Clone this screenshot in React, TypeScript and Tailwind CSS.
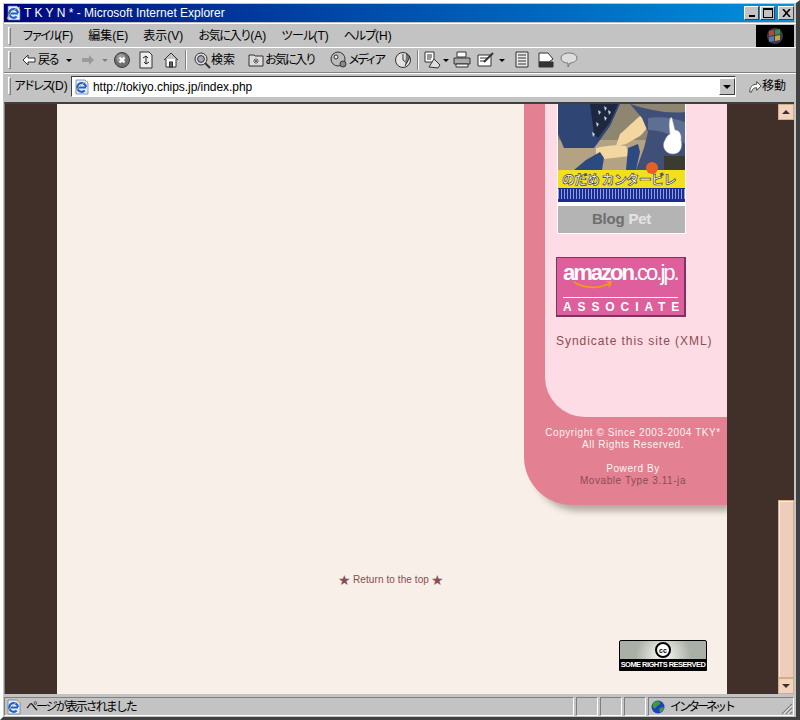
const uiFont = "font-['Liberation_Sans','Noto_Sans_CJK_JP',sans-serif]";

function Grip() {
  return <div className="h-[18px] w-[3px] shrink-0 border-t border-l border-t-white border-l-white border-r border-b border-r-[#808080] border-b-[#808080]" />;
}

function IeLogo({ size = 16 }: { size?: number }) {
  return (
    <svg width={size} height={size} viewBox="0 0 16 16" className="shrink-0">
      <path d="M2 1h9l3 3v11H2z" fill="#e6ecf8" stroke="#5570a8" strokeWidth="0.7" />
      <path d="M4.5 8.5h7.5M12 8a4.4 4.4 0 1 0-1.3 3.6" fill="none" stroke="#1b62d0" strokeWidth="2.1" />
      <path d="M1 14c2-5 7-10 13-12" fill="none" stroke="#e8b93c" strokeWidth="0.9" />
    </svg>
  );
}

function Stop() {
  return (
    <svg width="16" height="18" viewBox="0 0 16 18">
      <circle cx="8" cy="9" r="7.5" fill="#6f6f6f" stroke="#3c3c3c" />
      <circle cx="7" cy="7.5" r="4.5" fill="#9b9b9b" />
      <path d="M5.5 6.5l5 5M10.5 6.5l-5 5" stroke="#fff" strokeWidth="2" />
    </svg>
  );
}

function Drop({ className }: { className: string }) {
  return <span className={`block h-0 w-0 shrink-0 border-x-[3px] border-t-[3px] border-x-transparent border-t-black ${className}`} />;
}

function Icon({ children, w = 18 }: { children: React.ReactNode; w?: number }) {
  return (
    <svg width={w} height="18" viewBox={`0 0 ${w} 18`} fill="none" stroke="#333" strokeWidth="1" className="shrink-0">
      {children}
    </svg>
  );
}

function Separator({ className }: { className: string }) {
  return <div className={`h-[20px] w-[2px] shrink-0 border-l border-l-[#808080] border-r border-r-white ${className}`} />;
}

function Globe() {
  return (
    <svg width="14" height="14" viewBox="0 0 14 14" className="shrink-0">
      <circle cx="7" cy="7" r="6.5" fill="#1c3fc4" />
      <path d="M3 2c2-1 5-1 6 0 1 2-1 3-3 4-1 2-2 3-3 2-2-1-2-4 0-6zM9 8c2-1 4-1 4 0 0 2-2 4-4 4-1-1-1-3 0-4z" fill="#3f9c35" />
    </svg>
  );
}

function TitleBar() {
  return (
    <div className="flex h-[18px] w-[790px] items-center bg-gradient-to-r from-[#00007f] to-[#0f90dc] pl-[2px]">
      <IeLogo />
      <span className="ml-[2px] text-[12px] leading-none text-white">T K Y N * - Microsoft Internet Explorer</span>
      <div className="ml-auto flex">
        <div className="flex h-[14px] w-[15px] items-end justify-center border border-t-white border-l-white border-r-[#404040] border-b-[#404040] bg-[#c3c3c3] pb-[2px]">
          <div className="h-[2px] w-[6px] bg-black" />
        </div>
        <div className="ml-[1px] flex h-[14px] w-[15px] items-center justify-center border border-t-white border-l-white border-r-[#404040] border-b-[#404040] bg-[#c3c3c3]">
          <div className="h-[10px] w-[10px] border border-t-2 border-black" />
        </div>
        <div className="ml-[3px] flex h-[14px] w-[16px] items-center justify-center border border-t-white border-l-white border-r-[#404040] border-b-[#404040] bg-[#c3c3c3]">
          <svg width="9" height="8" viewBox="0 0 9 8"><path d="M1 0l7 8M8 0l-7 8" stroke="#000" strokeWidth="1.6" /></svg>
        </div>
      </div>
    </div>
  );
}

function MenuBar() {
  return (
    <div className="mt-[1px] flex h-[24px] items-center border-t border-t-white pl-[4px] pr-[2px]">
      <Grip />
      <div className="ml-[11px] flex gap-[15px] whitespace-nowrap text-[12px] leading-none text-black">
        <span><span className="tracking-[-3px]">ファイル</span>(F)</span>
        <span>編集(E)</span>
        <span>表示(V)</span>
        <span><span className="tracking-[-1.6px]">お気に入り</span>(A)</span>
        <span><span className="tracking-[-1.3px]">ツール</span>(T)</span>
        <span><span className="tracking-[-1.6px]">ヘルプ</span>(H)</span>
      </div>
      <div className="ml-auto flex h-[22px] w-[38px] items-center justify-center bg-black">
        <svg width="18" height="16" viewBox="0 0 18 16">
          <circle cx="9" cy="8" r="8" fill="#3a3a50" />
          <path d="M3 3l5-1v5l-5 1z" fill="#b8483a" />
          <path d="M9 2l5-1v5l-5 1z" fill="#3f8f45" />
          <path d="M3 9l5-1v5l-5 1z" fill="#5a77b0" />
          <path d="M9 8l5-1v5l-5 1z" fill="#c6a23a" />
        </svg>
      </div>
    </div>
  );
}

function ToolBar() {
  return (
    <div className="flex h-[26px] items-center whitespace-nowrap border-t border-t-white border-b border-b-[#808080] pl-[4px] text-[12px] leading-none text-black">
      <Grip />
      <svg width="14" height="12" viewBox="0 0 14 12" className="ml-[11px] shrink-0"><path d="M6 1L1 6l5 5V8h7V4H6z" fill="#fff" stroke="#333" /></svg>
      <span className="ml-[2px] w-[20px] tracking-[-2px]">戻る</span>
      <Drop className="ml-[8px]" />
      <svg width="14" height="12" viewBox="0 0 14 12" className="ml-[9px] shrink-0"><path d="M8 1l5 5-5 5V8H1V4h7z" fill="#9a9a9a" /></svg>
      <span className="ml-[7px] block h-0 w-0 border-x-[3px] border-t-[3px] border-x-transparent border-t-[#808080]" />
      <div className="ml-[6px] flex"><Stop /></div>
      <div className="ml-[9px] flex">
        <Icon w={14}>
          <path d="M1 1h9l3 3v13H1z" fill="#eee" />
          <path d="M4 7l3-2 2 2M10 11l-3 2-2-2M7 5v8" stroke="#222" />
        </Icon>
      </div>
      <div className="ml-[10px] flex">
        <Icon w={16}>
          <path d="M1 9l7-7 7 7" />
          <path d="M3 8v8h10V8" fill="#fff" />
          <rect x="6.5" y="11" width="3" height="5" fill="#666" />
        </Icon>
      </div>
      <Separator className="ml-[6px]" />
      <div className="ml-[6px] flex">
        <Icon>
          <circle cx="8" cy="8" r="6" fill="#ddd" />
          <circle cx="8" cy="8" r="3.4" fill="#aab" />
          <path d="M12 12l5 5" strokeWidth="2" />
        </Icon>
      </div>
      <span className="w-[23px]">検索</span>
      <div className="ml-[14px] flex">
        <Icon w={16}>
          <path d="M1 4h5l1 1h8v10H1z" fill="#ddd" />
          <path d="M8 7v6M5 10h6M6 8l4 4M10 8l-4 4" stroke="#666" />
        </Icon>
      </div>
      <span className="ml-[1px] w-[51px] tracking-[-2px]">お気に入り</span>
      <div className="ml-[14px] flex">
        <Icon>
          <circle cx="8" cy="8" r="7" fill="#bbb" />
          <circle cx="6" cy="6" r="2" fill="#eee" />
          <circle cx="13" cy="13" r="3" fill="#8a8a8a" />
        </Icon>
      </div>
      <span className="w-[33px] tracking-[-3px]">メディア</span>
      <div className="ml-[13px] flex">
        <Icon>
          <circle cx="9" cy="9" r="7.5" fill="#e4e4e4" />
          <path d="M9 9V3M9 9l4 3" />
          <path d="M12 3l4 3-5 9" fill="#777" />
        </Icon>
      </div>
      <Separator className="ml-[5px]" />
      <div className="ml-[5px] flex">
        <Icon>
          <path d="M1 1h9v10H1z" fill="#fff" />
          <path d="M3 4h5M3 6h5M3 8h4" />
          <path d="M5 16l5-8 6 6-2 3z" fill="#ddd" />
        </Icon>
      </div>
      <Drop className="ml-[1px]" />
      <div className="ml-[4px] flex">
        <Icon>
          <path d="M4 1h9v5H4z" fill="#fff" />
          <path d="M1 7h16v6H1z" fill="#aaa" />
          <path d="M3 13h12v3H3z" fill="#eee" />
        </Icon>
      </div>
      <div className="ml-[6px] flex">
        <Icon>
          <path d="M1 4h13v11H1z" fill="#fff" />
          <path d="M3 7h7M3 10h5" />
          <path d="M7 11l9-9" strokeWidth="2" />
        </Icon>
      </div>
      <Drop className="ml-[4px]" />
      <div className="ml-[8px] flex">
        <Icon>
          <path d="M3 1h12v15H3z" fill="#e8e8e8" />
          <path d="M5 4h8M5 7h8M5 10h8M5 13h8" />
        </Icon>
      </div>
      <div className="ml-[6px] flex">
        <Icon>
          <path d="M2 2h9l5 6-4 3H2z" fill="#fff" />
          <path d="M2 11h14v5H2z" fill="#333" />
        </Icon>
      </div>
      <div className="ml-[5px] flex">
        <Icon>
          <path d="M1 7c0-3 4-5 8-5s8 2 8 5-4 5-7 5l-2 4v-4c-4 0-7-2-7-5z" fill="#ddd" stroke="#777" />
        </Icon>
      </div>
    </div>
  );
}

function AddressBar() {
  return (
    <div className="flex h-[29px] items-start border-t border-t-white pl-[4px] pt-[2px] text-[12px] leading-none">
      <div className="pt-[1px]"><Grip /></div>
      <span className="ml-[3px] w-[57px] shrink-0 whitespace-nowrap pt-[4px]"><span className="tracking-[-2.75px]">アドレス</span>(D)</span>
      <div className="flex h-[21px] flex-1 items-center border border-t-[#404040] border-l-[#404040] border-r-white border-b-white bg-white pl-[2px]">
        <IeLogo />
        <span className="ml-[3px] text-[12px] tracking-[-0.05px] text-black">http://tokiyo.chips.jp/index.php</span>
        <div className="ml-auto flex h-[17px] w-[16px] items-center justify-center border border-t-white border-l-white border-r-[#404040] border-b-[#404040] bg-[#c3c3c3]">
          <span className="h-0 w-0 border-x-[4px] border-t-[4px] border-x-transparent border-t-black" />
        </div>
      </div>
      <div className="flex w-[60px] items-center pl-[12px] pt-[2px]">
        <svg width="14" height="16" viewBox="0 0 16 16" fill="none" stroke="#333" className="shrink-0"><path d="M2 15c0-6 3-9 8-9V3l5 5-5 5v-3c-3 0-5 1-6 5z" fill="#fff" /></svg>
        <span className="whitespace-nowrap">移動</span>
      </div>
    </div>
  );
}

function Banner() {
  return (
    <div className="w-[129px] border-x border-b border-white bg-white">
      <svg width="127" height="98" viewBox="0 0 127 98" className="block">
        <rect width="127" height="66" fill="#8f8672" />
        <rect width="16" height="30" fill="#a8905c" />
        <rect y="36" width="127" height="30" fill="#b3a283" />
        <path d="M0 0h62l-10 22-10 14-6 8H6L0 30z" fill="#2f4675" />
        <path d="M32 0h28L52 18l-12 16-4-4z" fill="#1d2740" />
        <path d="M40 6l3 2-2 3zM46 2l3 2-2 3zM38 18l3 2-2 3zM46 12l3 2-2 3zM34 28l3 2-2 3zM50 6l3 2-2 3z" fill="#c8d0e0" />
        <path d="M62 30c10-8 22-22 28-22 4 2 2 16-8 24l-14 8-10 2z" fill="#f4d6a0" />
        <path d="M38 44c8-2 22-4 30-2l4 10-34 4z" fill="#f4d6a0" />
        <path d="M72 0c18 6 38 10 55 8v58H78l8-22 4-16-6-14z" fill="#3f4f78" />
        <path d="M90 14c12-2 26 0 37 4v22c-12-10-26-14-37-14z" fill="#5f6f94" />
        <path d="M16 66l12-10 14-8 4 6-2 12z" fill="#2c4a80" />
        <path d="M68 66l2-22 10-4 2 8-4 18z" fill="#2c4a80" />
        <path d="M112 30c-2-12 0-18 2-16l3 12c4 0 7 4 6 10 2 6 0 14-8 14s-12-8-8-14c1-3 3-5 5-6z" fill="#fff" stroke="#999" strokeWidth="0.5" />
        <rect x="106" y="52" width="21" height="14" fill="#3b3b30" />
        <rect y="66" width="127" height="18" fill="#f2e01c" />
        <circle cx="94" cy="64" r="6" fill="#e6602a" />
        <text x="4" y="80" fontSize="13" fontWeight="700" fontFamily="'Noto Sans CJK JP',sans-serif" fill="#fff" stroke="#444" strokeWidth="0.7" letterSpacing="-0.6">のだめ カンタービレ</text>
        <rect y="84" width="127" height="14" fill="#1b2c92" />
        <path d="M0 90h127" stroke="#8fa0e0" strokeDasharray="1 2" strokeWidth="10" />
      </svg>
      <div className="mt-[4px] flex h-[27px] items-center justify-center bg-[#b4b4b4] font-['Liberation_Sans',sans-serif] text-[15px] font-bold tracking-[-0.2px]">
        <span className="text-[#6e6e6e]">Blog&nbsp;</span><span className="text-[#e4e4e4]">Pet</span>
      </div>
    </div>
  );
}

function Amazon() {
  return (
    <div className="mt-[23px] h-[60px] w-[130px] border border-b-2 border-r-2 border-[#7b3560] bg-[#de5f9b] px-[6px] text-white">
      <div className="relative h-[39px] whitespace-nowrap pt-[4px] font-['Liberation_Sans',sans-serif] text-[22px] leading-[22px] tracking-[-2px]">
        <span className="font-bold">amazon</span><span>.co.jp.</span>
        <svg width="40" height="9" viewBox="0 0 40 9" className="absolute left-[10px] top-[23px]">
          <path d="M1 1c10 7 26 7 36 1M33 0l5 1-2 5" fill="none" stroke="#f39a1a" strokeWidth="1.6" />
        </svg>
      </div>
      <div className="whitespace-nowrap border-t border-t-white pt-[3px] font-['Liberation_Sans',sans-serif] text-[12px] font-bold leading-[12px] tracking-[5.9px]">ASSOCIATE</div>
    </div>
  );
}

function Sidebar() {
  return (
    <div className="ml-auto w-[203px] rounded-bl-[48px] bg-[#e38091] pb-[18px] pl-[21px] shadow-[6px_9px_6px_-3px_rgba(70,60,50,0.38)]">
      <div className="h-[313px] rounded-bl-[40px] bg-[#fddce5] pl-[11px]">
        <div className="pl-[1px]"><Banner /></div>
        <Amazon />
        <p className="mt-[17px] whitespace-nowrap text-[12px] leading-[14px] tracking-[0.95px] text-[#8a4d50]">Syndicate this site (XML)</p>
      </div>
      <div className="-ml-[6px] mt-[10px] text-center text-[10px] leading-[12px] tracking-[0.57px]">
        <p className="whitespace-nowrap text-[#fff4f0]">Copyright © Since 2003-2004 TKY*</p>
        <p className="text-[#fff4f0]">All Rights Reserved.</p>
        <p className="mt-[12px] text-[#fff4f0]">Powerd By</p>
        <p className="text-[#8a4d50]">Movable Type 3.11-ja</p>
      </div>
    </div>
  );
}

function CcBadge() {
  return (
    <div className="ml-[562px] mt-[52px] h-[31px] w-[88px] shrink-0 overflow-hidden rounded-t-[2px] border border-black bg-[radial-gradient(circle,#eef0ea_10%,#abb0a6_60%)]">
      <div className="flex h-[18px] items-center justify-center">
        <div className="flex h-[16px] w-[16px] items-center justify-center rounded-full border-2 border-black bg-white font-['Liberation_Sans',sans-serif] text-[7px] font-bold leading-none text-black">cc</div>
      </div>
      <div className="h-[12px] whitespace-nowrap bg-black text-center font-['Liberation_Sans',sans-serif] text-[7.5px] font-bold leading-[12px] tracking-[-0.55px] text-white">SOME RIGHTS RESERVED</div>
    </div>
  );
}

function ScrollBar() {
  return (
    <div className="flex w-[16px] shrink-0 flex-col">
      <div className="flex h-[16px] items-center justify-center border border-[#d2ad85] bg-[#f2d3c0]">
        <span className="h-0 w-0 border-x-[4px] border-b-[4px] border-x-transparent border-b-[#403028]" />
      </div>
      <div className="flex-1" />
      <div className="h-[178px] border border-[#d2ad85] bg-[#eecdbc] shadow-[inset_1px_1px_0_#f7efe8]" />
      <div className="flex h-[16px] items-center justify-center border border-[#d2ad85] bg-[#f2d3c0]">
        <span className="h-0 w-0 border-x-[4px] border-t-[4px] border-x-transparent border-t-[#403028]" />
      </div>
    </div>
  );
}

function Page() {
  return (
    <div className="flex h-[592px] w-[790px] border-t-2 border-l border-t-[#404040] border-l-[#808080] bg-[#41302a]">
      <div className="ml-[52px] flex w-[670px] flex-col overflow-hidden bg-[#f7efe8]">
        <Sidebar />
        <div className="mt-[67px] flex items-center justify-center gap-[2px] pr-[2px] font-['Liberation_Sans',sans-serif] text-[10px] leading-[16px] tracking-[0.08px] text-[#8a4d50]">
          <span className="text-[14px]">★</span>
          <span>Return to the top</span>
          <span className="text-[14px]">★</span>
        </div>
        <CcBadge />
      </div>
      <div className="w-[51px]" />
      <ScrollBar />
    </div>
  );
}

function StatusBar() {
  const sunken = "border border-t-[#808080] border-l-[#808080] border-r-white border-b-white";
  return (
    <div className="mt-[3px] flex h-[19px] w-[790px] items-stretch text-[12px] leading-none text-black">
      <div className={`flex w-[570px] items-center ${sunken} pl-[1px]`}>
        <IeLogo />
        <span className="ml-[4px] whitespace-nowrap tracking-[-2px]">ページが表示されました</span>
      </div>
      <div className={`ml-[2px] w-[22px] ${sunken}`} />
      <div className={`ml-[2px] w-[22px] ${sunken}`} />
      <div className={`ml-[2px] w-[22px] ${sunken}`} />
      <div className={`ml-[2px] flex flex-1 items-center ${sunken} pl-[2px]`}>
        <Globe />
        <span className="ml-[5px] whitespace-nowrap tracking-[-3px]">インターネット</span>
        <svg width="13" height="13" viewBox="0 0 13 13" className="ml-auto self-end">
          <path d="M12 2L2 12M12 6l-6 6M12 10l-2 2" stroke="#808080" strokeWidth="1.2" />
          <path d="M12 3.5L3.5 12M12 7.5L7.5 12" stroke="#fff" strokeWidth="0.8" />
        </svg>
      </div>
    </div>
  );
}

export default function App() {
  return (
    <div className={`h-[720px] w-[800px] overflow-hidden border-[3px] border-r-[4px] border-t-white border-l-white border-r-[#404040] border-b-[#404040] bg-[#c3c3c3] ${uiFont}`}>
      <div className="ml-[1px] mt-[1px]">
        <TitleBar />
        <MenuBar />
        <ToolBar />
        <AddressBar />
        <Page />
        <StatusBar />
      </div>
    </div>
  );
}
